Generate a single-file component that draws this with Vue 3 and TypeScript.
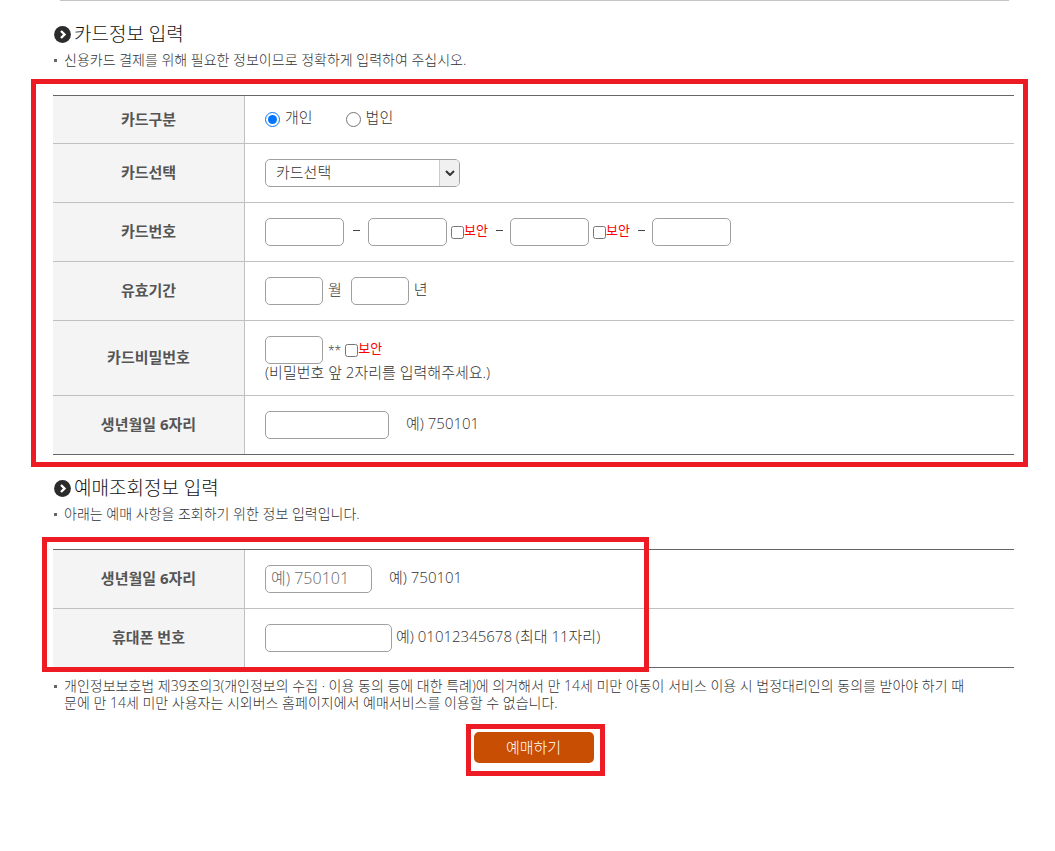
<script setup lang="ts">
import { ref } from 'vue'

const cardKind = ref<'personal' | 'corporate'>('personal')
const cardCompany = ref('')
const cardNumber = ref(['', '', '', ''])
const maskSecond = ref(false)
const maskThird = ref(false)
const expiryMonth = ref('')
const expiryYear = ref('')
const cardPassword = ref('')
const maskPassword = ref(false)
const cardBirth = ref('')
const lookupBirth = ref('')
const phone = ref('')
</script>

<template>
  <main class="page">
    <div class="panel-end"></div>
    <form @submit.prevent>
      <section>
        <h2 class="title">
          <svg class="title-icon" viewBox="0 0 17 17" aria-hidden="true">
            <circle cx="8.5" cy="8.5" r="8.4" fill="#2b2b2b" />
            <path d="M7 5l3.5 3.5L7 12" fill="none" stroke="#fff" stroke-width="2.4" />
          </svg>
          <span>카드정보 입력</span>
        </h2>
        <p class="desc">신용카드 결제를 위해 필요한 정보이므로 정확하게 입력하여 주십시오.</p>

        <div class="block card-block">
          <table class="form-table">
            <tbody>
              <tr>
                <th scope="row">카드구분</th>
                <td>
                  <div class="line kinds">
                    <label class="kind"><input v-model="cardKind" type="radio" name="kind" value="personal" /><span>개인</span></label>
                    <label class="kind"><input v-model="cardKind" type="radio" name="kind" value="corporate" /><span>법인</span></label>
                  </div>
                </td>
              </tr>
              <tr>
                <th scope="row"><label for="company">카드선택</label></th>
                <td>
                  <div class="select-box">
                    <select id="company" v-model="cardCompany">
                      <option value="">카드선택</option>
                    </select>
                    <span class="select-arrow">
                      <svg viewBox="0 0 10 6" aria-hidden="true"><path d="M1 1l4 4 4-4" fill="none" stroke="#333" stroke-width="2" /></svg>
                    </span>
                  </div>
                </td>
              </tr>
              <tr>
                <th scope="row"><label for="number1">카드번호</label></th>
                <td>
                  <div class="line">
                    <input id="number1" v-model="cardNumber[0]" class="box quarter" type="text" maxlength="4" />
                    <i class="dash first"></i>
                    <input v-model="cardNumber[1]" class="box quarter" type="text" maxlength="4" aria-label="카드번호 2" />
                    <label class="mask"><input v-model="maskSecond" type="checkbox" /><span>보안</span></label>
                    <i class="dash"></i>
                    <input v-model="cardNumber[2]" class="box quarter" type="text" maxlength="4" aria-label="카드번호 3" />
                    <label class="mask"><input v-model="maskThird" type="checkbox" /><span>보안</span></label>
                    <i class="dash"></i>
                    <input v-model="cardNumber[3]" class="box quarter" type="text" maxlength="4" aria-label="카드번호 4" />
                  </div>
                </td>
              </tr>
              <tr>
                <th scope="row">유효기간</th>
                <td>
                  <div class="line expiry">
                    <input id="month" v-model="expiryMonth" class="box short" type="text" maxlength="2" />
                    <label for="month">월</label>
                    <input id="year" v-model="expiryYear" class="box short" type="text" maxlength="2" />
                    <label for="year">년</label>
                  </div>
                </td>
              </tr>
              <tr>
                <th scope="row"><label for="password">카드비밀번호</label></th>
                <td>
                  <div class="line">
                    <input id="password" v-model="cardPassword" class="box short" type="text" maxlength="2" />
                    <span class="stars">**</span>
                    <label class="mask"><input v-model="maskPassword" type="checkbox" /><span>보안</span></label>
                  </div>
                  <p class="hint">(비밀번호 앞 2자리를 입력해주세요.)</p>
                </td>
              </tr>
              <tr>
                <th scope="row"><label for="birth">생년월일 6자리</label></th>
                <td>
                  <div class="line spaced">
                    <input id="birth" v-model="cardBirth" class="box birth" type="text" maxlength="6" />
                    <span>예) 750101</span>
                  </div>
                </td>
              </tr>
            </tbody>
          </table>
          <div class="frame"></div>
        </div>
      </section>

      <section>
        <h2 class="title">
          <svg class="title-icon" viewBox="0 0 17 17" aria-hidden="true">
            <circle cx="8.5" cy="8.5" r="8.4" fill="#2b2b2b" />
            <path d="M7 5l3.5 3.5L7 12" fill="none" stroke="#fff" stroke-width="2.4" />
          </svg>
          <span>예매조회정보 입력</span>
        </h2>
        <p class="desc">아래는 예매 사항을 조회하기 위한 정보 입력입니다.</p>

        <div class="block lookup-block">
          <table class="form-table">
            <tbody>
              <tr>
                <th scope="row"><label for="lookup-birth">생년월일 6자리</label></th>
                <td>
                  <div class="line spaced">
                    <input id="lookup-birth" v-model="lookupBirth" class="box lookup-birth" type="text" maxlength="6" placeholder="예) 750101" />
                    <span>예) 750101</span>
                  </div>
                </td>
              </tr>
              <tr>
                <th scope="row"><label for="phone">휴대폰 번호</label></th>
                <td>
                  <div class="line near">
                    <input id="phone" v-model="phone" class="box phone" type="text" maxlength="11" />
                    <span>예) 01012345678 (최대 11자리)</span>
                  </div>
                </td>
              </tr>
            </tbody>
          </table>
          <div class="frame"></div>
        </div>
      </section>

      <p class="desc note">개인정보보호법 제39조의3(개인정보의 수집 · 이용 동의 등에 대한 특례)에 의거해서 만 14세 미만 아동이 서비스 이용 시 법정대리인의 동의를 받아야 하기 때<br />문에 만 14세 미만 사용자는 시외버스 홈페이지에서 예매서비스를 이용할 수 없습니다.</p>

      <div class="actions">
        <div class="block submit-block">
          <button type="submit">예매하기</button>
          <div class="frame"></div>
        </div>
      </div>
    </form>
  </main>
</template>

<style>
body {
  margin: 0;
  background: #fff;
}
</style>

<style scoped>
.page {
  box-sizing: border-box;
  padding: 0 41px 40px 53px;
  font-family: "Open Sans", "Noto Sans CJK KR", sans-serif;
  font-size: 14px;
  font-weight: 300;
  color: #333;
}
.panel-end {
  height: 1px;
  margin: 0 5px 0 7px;
  background: #c4c4c4;
}
.title {
  display: flex;
  align-items: center;
  gap: 3px;
  margin: 0;
  padding-top: 21px;
  font-size: 19px;
  font-weight: 300;
  line-height: 24px;
  color: #111;
}
.title-icon {
  width: 17px;
  height: 17px;
  margin-left: 1px;
}
.desc {
  position: relative;
  margin: 5px 0 26px;
  padding-left: 11px;
  line-height: 18px;
}
.desc::before {
  content: "";
  position: absolute;
  left: 1px;
  top: 8px;
  width: 3px;
  height: 3px;
  background: #666;
}
.note {
  margin: 9px 0 21px;
  line-height: 17px;
}
.block {
  position: relative;
}
.frame {
  position: absolute;
  border: 5px solid #ed1c24;
  pointer-events: none;
}
.card-block .frame {
  inset: -16px -14px -12px -22px;
}
.lookup-block .frame {
  box-sizing: border-box;
  top: -12px;
  bottom: -4px;
  left: -11px;
  width: 607px;
}
.submit-block .frame {
  inset: -8px -11px -13px -8px;
}
.form-table {
  width: 100%;
  border-spacing: 0;
  border-top: 1px solid #666;
  border-bottom: 1px solid #666;
}
th,
td {
  border-bottom: 1px solid #c0c0c0;
}
tr:last-child > * {
  border-bottom: 0;
}
th {
  box-sizing: border-box;
  width: 192px;
  padding: 0 0 2px;
  border-right: 1px solid #c0c0c0;
  background: #f4f4f4;
  font-size: 15px;
  font-weight: 700;
  line-height: 18px;
  color: #555;
}
td {
  padding: 15px 0 15px 20px;
  font-size: 15px;
  line-height: 17px;
}
.line {
  display: flex;
  align-items: center;
}
.line > span,
.line > label > span,
.expiry > label {
  padding-bottom: 4px;
}
input[type="radio"],
input[type="checkbox"] {
  flex: none;
  width: 13px;
  height: 13px;
  margin: 0;
}
.kinds {
  gap: 33px;
}
.kind {
  display: flex;
  align-items: center;
  gap: 5px;
  height: 17px;
}
.kind input[type="radio"] {
  width: 15px;
  height: 15px;
}
.box,
select {
  box-sizing: border-box;
  height: 28px;
  margin: 0;
  border: 1px solid #a0a0a0;
  border-radius: 5px;
  background: #fff;
  font: inherit;
  color: #333;
}
.box {
  padding: 0 5px 2px;
}
.box::placeholder {
  color: #666;
}
.quarter {
  width: 79px;
}
.short {
  width: 58px;
}
.birth {
  width: 124px;
}
.lookup-birth {
  width: 107px;
  font-size: 16px;
}
.phone {
  width: 127px;
}
.select-box {
  position: relative;
  width: 195px;
  height: 28px;
}
select {
  display: block;
  width: 100%;
  padding: 0 24px 2px 10px;
  appearance: none;
}
.select-arrow {
  position: absolute;
  top: 1px;
  right: 1px;
  bottom: 1px;
  display: flex;
  align-items: center;
  justify-content: center;
  width: 19px;
  border-left: 1px solid #ccc;
  border-radius: 0 4px 4px 0;
  background: #f0f0f0;
  pointer-events: none;
}
.select-arrow svg {
  width: 10px;
  height: 6px;
}
.dash {
  width: 7px;
  height: 1px;
  margin: 0 7px 4px 8px;
  background: #444;
}
.dash.first {
  margin-left: 9px;
  margin-right: 8px;
}
.mask {
  display: flex;
  align-items: center;
  margin-left: 4px;
  font-size: 13px;
  font-weight: 400;
  color: #f00;
}
.expiry > label {
  margin: 0 9px 0 5px;
}
.line > .stars {
  margin-left: 5px;
  padding: 0;
  font-size: 12px;
}
.hint {
  margin: 0;
  line-height: 16px;
}
.spaced {
  gap: 17px;
}
.near {
  gap: 4px;
}
.actions {
  display: flex;
  justify-content: center;
}
button {
  display: block;
  width: 120px;
  height: 31px;
  padding: 0 0 2px;
  border: 0;
  border-radius: 5px;
  background: #c84e04;
  font: inherit;
  font-size: 15px;
  color: #fff;
}
</style>
